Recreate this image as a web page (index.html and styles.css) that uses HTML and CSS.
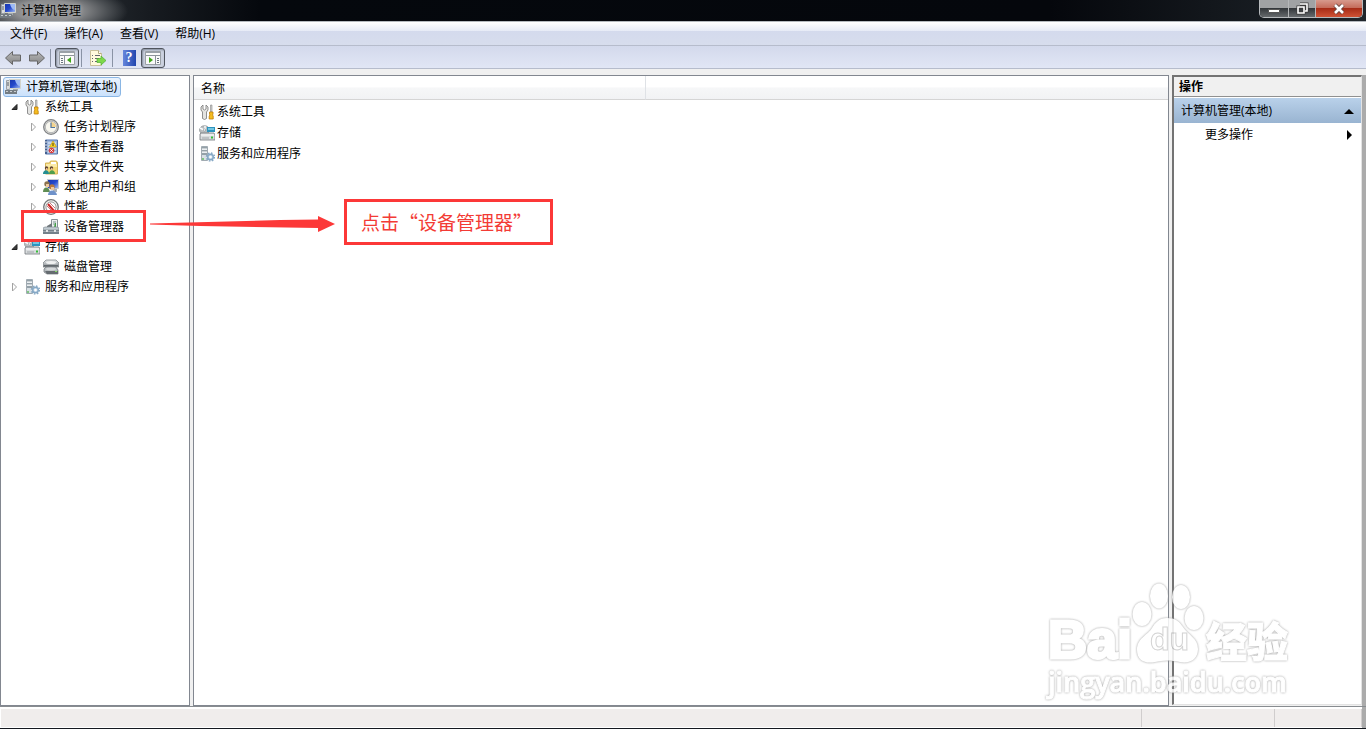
FILE: index.html
```html
<!DOCTYPE html>
<html lang="zh-CN">
<head>
<meta charset="utf-8">
<title>计算机管理</title>
<link rel="stylesheet" href="styles.css">
</head>
<body>
<svg class="sprite" aria-hidden="true">
  <defs>
    <linearGradient id="g-screen" x1="0" y1="0" x2="1" y2="1"><stop offset="0" stop-color="#1735ad"/><stop offset=".5" stop-color="#2549cc"/><stop offset="1" stop-color="#a9c4f5"/></linearGradient>
    <linearGradient id="g-metal" x1="0" y1="0" x2="0" y2="1"><stop offset="0" stop-color="#e8eaec"/><stop offset="1" stop-color="#858b90"/></linearGradient>
    <linearGradient id="g-arrow" x1="0" y1="0" x2="0" y2="1"><stop offset="0" stop-color="#b8b8b8"/><stop offset="1" stop-color="#858585"/></linearGradient>
  </defs>
  <symbol id="computer" viewBox="0 0 16 16">
    <path d="M1.500 1.500h3v9h-3z" fill="#d9dcdf" stroke="#9aa1a6"/><path d="M2 4h2M2 6h2" stroke="#5b6167"/>
    <path d="M4.500.5h11v9h-11z" fill="url(#g-screen)" stroke="#d2d4cc"/><path d="M10 1h5v6c-2 0-4-2-5-6z" fill="#9dbaf4"/>
    <path d="M8 10h5v2H8z" fill="#a4abb0"/><path d="M0 11h12v4H0z" fill="#747c82"/><path d="M1 12.500h2M5 12.500h2M9 12.500h2" stroke="#c9cdd0"/>
  </symbol>
  <symbol id="tools" viewBox="0 0 16 16">
    <path d="M4 1v4l1.500 1L7 5V1l2 2v3L7.500 8v6.500l-2 1-2-1V8L2 6V3z" fill="#e4e4e2" stroke="#777" stroke-width=".8"/>
    <path d="M11.500 1H13v7h-1.500z" fill="#d2d2d2" stroke="#777" stroke-width=".5"/><path d="M10.500 8H14v2l-.5 1 .7 1v3h-4v-3l.8-1-.5-1z" fill="#f5bd20" stroke="#c07e08" stroke-width=".8"/>
  </symbol>
  <symbol id="clock" viewBox="0 0 16 16">
    <circle cx="8" cy="8" r="7.300" fill="#dedcd6" stroke="#7f8285" stroke-width="1.300"/><circle cx="8" cy="8" r="5.700" fill="#f8f7ef" stroke="#b4b6b8"/>
    <path d="M8 8V3a5 5 0 0 1 5 5z" fill="#f2d38f"/><path d="M8 3.500V8.500H12" fill="none" stroke="#4f74a0" stroke-width="1.200"/>
  </symbol>
  <symbol id="events" viewBox="0 0 16 16">
    <path d="M2.500 1h12v14h-12z" fill="#9db6dc" stroke="#5474ac"/><path d="M3 1v14" stroke="#44608f" stroke-width="2"/><path d="M1 3h3M1 6h3M1 9h3M1 12h3" stroke="#e6e8ee"/>
    <path d="M5 4h8M5 7h8M5 10h8M5 13h8" stroke="#e9f0fb"/><path d="M10 2l3.500 6h-7z" fill="#ffdb28" stroke="#c49504" stroke-width=".6"/><path d="M10 4v3" stroke="#40350a"/>
    <circle cx="8.500" cy="11.500" r="2.800" fill="#d83e3e"/><path d="M7.300 10.300l2.400 2.400m0-2.400l-2.400 2.400" stroke="#fff"/>
  </symbol>
  <symbol id="shared" viewBox="0 0 16 16">
    <path d="M2.500 4h4l1-2h6l1 2v11h-12z" fill="#f4d774" stroke="#d4b45a"/><path d="M8 3h5v2H8z" fill="#fff"/><path d="M3 5h11v3H3z" fill="#fbeaa7"/>
    <circle cx="3.500" cy="9" r="1.700" fill="#5f4634"/><circle cx="8.500" cy="9" r="1.700" fill="#5f4634"/><path d="M3 9h1.500v2H3zM8 9h1.500v2H8z" fill="#e9bd92"/>
    <path d="M0 15c0-5 6-5 6 0z" fill="#268f91"/><path d="M6 15c0-5 6-5 6 0z" fill="#4f9e4c"/>
  </symbol>
  <symbol id="users" viewBox="0 0 16 16">
    <path d="M4.500.5h11v9h-11z" fill="url(#g-screen)" stroke="#c7cbd0"/><path d="M10 10h4v3h-4z" fill="#aab1b8"/>
    <circle cx="4" cy="5" r="2.700" fill="#8a724f"/><circle cx="9" cy="8" r="2.700" fill="#b7793d"/><path d="M3 5h3v3H3zM8 8h3v3H8z" fill="#f0c89c"/>
    <path d="M0 13c0-6 6-6 7 0z" fill="#5f8d53"/><path d="M5 16c0-6 8-6 9 0z" fill="#6f92ca"/>
  </symbol>
  <symbol id="performance" viewBox="0 0 16 16">
    <circle cx="8" cy="8" r="7.300" fill="#f4f3ef" stroke="#74777a" stroke-width="1.300"/><circle cx="8" cy="8" r="5.100" fill="#fff" stroke="#949799"/>
    <path d="M5 5l6 7" stroke="#cf2525" stroke-width="2"/><path d="M7 4l5 5M4 7l4 4" stroke="#bb5959" stroke-width=".8"/>
  </symbol>
  <symbol id="device" viewBox="0 0 16 16">
    <path d="M8.500.5h6v9h-6z" fill="#edf0f0" stroke="#899197"/><path d="M10 2h3v4h-3z" fill="#b4c2c0"/><path d="M12 4h1v4h-2z" fill="#43a047"/><path d="M4 7l5-3v4H4z" fill="#6d7479"/>
    <path d="M0 9l2-1h12l2 1v2H0z" fill="#c2cbd2" stroke="#828c94" stroke-width=".7"/><path d="M0 11h16v4H0z" fill="#74818b"/><path d="M0 12.500h16" stroke="#99a4ac"/><path d="M3 11h2v2H3zM11 11h2v2h-2z" fill="#e0e4e6"/>
  </symbol>
  <symbol id="storage" viewBox="0 0 16 16">
    <ellipse cx="5.500" cy="5" rx="5" ry="4.300" fill="#b9bdbf" stroke="#888e91" stroke-width=".7"/><path d="M1 3l4 2M6 1v4" stroke="#f9fafb" stroke-width="1.500"/><circle cx="5.500" cy="5" r="1.200" fill="#eef2f3" stroke="#7a8185" stroke-width=".5"/>
    <path d="M8 2h8v5H8z" fill="#2c93be"/><path d="M9 3h6v2H9z" fill="#72c5e1"/><path d="M1 9l1-1h13l1 2v5H1z" fill="#d9dcde" stroke="#71777b" stroke-width=".8"/><path d="M2 10h13" stroke="#fff"/><path d="M12 11.500h2v2h-2z" fill="#35bd37"/><path d="M3 13h7" stroke="#a1a6aa"/>
  </symbol>
  <symbol id="disk" viewBox="0 0 16 16">
    <path d="M3 1h10l3 3v4H0V4z" fill="url(#g-metal)" stroke="#757b80" stroke-width=".7"/><ellipse cx="8" cy="3.500" rx="5" ry="1.600" fill="#f0f1f1"/><path d="M1 6h14v1.500H1z" fill="#62686c"/>
    <path d="M3 8h10l2 3v4H4l-3-2v-3z" fill="#b7bcbf" stroke="#6e7478" stroke-width=".7"/><ellipse cx="8" cy="10" rx="5" ry="1.400" fill="#d4d7d9"/><path d="M2 12h13v3H4z" fill="#656b70"/><path d="M12 12.500h2" stroke="#82dc63"/>
  </symbol>
  <symbol id="services" viewBox="0 0 16 16">
    <path d="M2.500.5h6v14h-6z" fill="#d7dfe4" stroke="#a1abb2"/><path d="M3 2h5M3 5h5M3 8h5" stroke="#51636c"/><path d="M3 3h5M3 6h5" stroke="#fff"/><path d="M3 12h2v2H3z" fill="#7fc582"/>
    <circle cx="11.500" cy="11" r="2.800" fill="#c5d8e8" stroke="#86a8c5" stroke-width="1.400"/><circle cx="11.500" cy="11" r="4" fill="none" stroke="#86a8c5" stroke-width="1.500" stroke-dasharray="1.600 1.540"/><circle cx="11.500" cy="11" r="1.300" fill="#fff"/>
  </symbol>
  <symbol id="pane-left" viewBox="0 0 16 16"><path d="M.5 1.500h15v13H.5z" fill="#fafafa" stroke="#9aa0a6"/><path d="M1 2.500h14" stroke="#9aa0a8"/><path d="M1 5.500h14M5.500 5.500V15" stroke="#8d949b"/><path d="M2 8.500h2M2 10.500h2M2 12.500h2" stroke="#68747e"/><path d="M12 7v6l-4-3z" fill="#3fa619"/></symbol>
  <symbol id="pane-right" viewBox="0 0 16 16"><path d="M.5 1.500h15v13H.5z" fill="#fafafa" stroke="#9aa0a6"/><path d="M1 2.500h14" stroke="#9aa0a8"/><path d="M1 5.500h14M10.500 5.500V15" stroke="#8d949b"/><path d="M12 8.500h2M12 10.500h2M12 12.500h2" stroke="#68747e"/><path d="M4 7v6l4-3z" fill="#3fa619"/></symbol>
  <symbol id="export" viewBox="0 0 16 16"><path d="M.5.5h8l3 3v12H.5z" fill="#fffadd" stroke="#c9c19b"/><path d="M8.500.5v3h3" fill="#fff" stroke="#b3aa81"/><path d="M2 5.500h1M5 5.500h5M2 8.500h1M5 8.500h4M2 11.500h1M5 11.500h5" stroke="#63656e"/><path d="M7 8.500h4V6l5 4.500-5 4.500v-2.500H7z" fill="#7ed94b" stroke="#4fae37" stroke-width=".7"/></symbol>
  <symbol id="back" viewBox="0 0 16 16"><path d="M.5 8l7-6.500V5h8v6h-8v3.500z" fill="url(#g-arrow)" stroke="#666"/></symbol>
  <symbol id="forward" viewBox="0 0 16 16"><path d="M15.500 8l-7-6.500V5h-8v6h8v3.500z" fill="url(#g-arrow)" stroke="#666"/></symbol>
  <symbol id="open" viewBox="0 0 10 10"><path d="M8 2.500v5H3z" fill="#3a3a3a" stroke="#222"/></symbol>
  <symbol id="closed" viewBox="0 0 10 10"><path d="M3.500 1l4 4-4 4z" fill="#fff" stroke="#a3a3a3"/></symbol>
</svg>

<header class="titlebar">
  <svg class="icon"><use href="#computer"/></svg>
  <h1 class="title">计算机管理</h1>
  <div class="caption">
    <button class="cap cap-min" aria-label="最小化"><svg viewBox="0 0 14 14"><path d="M1.500 7.500h11v3h-11z" fill="#fff" stroke="#555"/></svg></button>
    <button class="cap cap-restore" aria-label="还原"><svg viewBox="0 0 14 14"><path d="M5 2h7v7h-2M3 5h6v6H3z" fill="none" stroke="#3b3b3b" stroke-width="3"/><path d="M5 2h7v7h-2M3 5h6v6H3z" fill="none" stroke="#fff" stroke-width="1.600"/></svg></button>
    <button class="cap cap-close" aria-label="关闭"><svg viewBox="0 0 14 14"><path d="M3 3l8 8M11 3l-8 8" stroke="#66443f" stroke-width="4.400"/><path d="M3 3l8 8M11 3l-8 8" stroke="#fff" stroke-width="2.600"/></svg></button>
  </div>
</header>

<nav class="menubar">
  <button class="menu">文件(F)</button><button class="menu">操作(A)</button><button class="menu">查看(V)</button><button class="menu">帮助(H)</button>
</nav>

<div class="toolbar">
  <button class="tool" aria-label="后退"><svg class="icon"><use href="#back"/></svg></button>
  <button class="tool" aria-label="前进"><svg class="icon"><use href="#forward"/></svg></button>
  <span class="divider"></span>
  <button class="tool pressed" aria-label="显示/隐藏控制台树"><svg class="icon"><use href="#pane-left"/></svg></button>
  <span class="divider"></span>
  <button class="tool" aria-label="导出列表"><svg class="icon"><use href="#export"/></svg></button>
  <span class="divider"></span>
  <button class="tool" aria-label="帮助"><span class="help">?</span></button>
  <button class="tool pressed" aria-label="显示/隐藏操作窗格"><svg class="icon"><use href="#pane-right"/></svg></button>
</div>

<main class="workspace">
  <nav class="pane tree">
    <a class="root" href="#"><svg class="icon"><use href="#computer"/></svg>计算机管理(本地)</a>
    <ul>
      <li><a class="node" href="#"><svg class="twisty"><use href="#open"/></svg><svg class="icon"><use href="#tools"/></svg>系统工具</a>
        <ul>
          <li><a class="node" href="#"><svg class="twisty"><use href="#closed"/></svg><svg class="icon"><use href="#clock"/></svg>任务计划程序</a></li>
          <li><a class="node" href="#"><svg class="twisty"><use href="#closed"/></svg><svg class="icon"><use href="#events"/></svg>事件查看器</a></li>
          <li><a class="node" href="#"><svg class="twisty"><use href="#closed"/></svg><svg class="icon"><use href="#shared"/></svg>共享文件夹</a></li>
          <li><a class="node" href="#"><svg class="twisty"><use href="#closed"/></svg><svg class="icon"><use href="#users"/></svg>本地用户和组</a></li>
          <li><a class="node" href="#"><svg class="twisty"><use href="#closed"/></svg><svg class="icon"><use href="#performance"/></svg>性能</a></li>
          <li><a class="node" href="#"><span class="twisty"></span><svg class="icon"><use href="#device"/></svg>设备管理器</a></li>
        </ul>
      </li>
      <li><a class="node" href="#"><svg class="twisty"><use href="#open"/></svg><svg class="icon"><use href="#storage"/></svg>存储</a>
        <ul>
          <li><a class="node" href="#"><span class="twisty"></span><svg class="icon"><use href="#disk"/></svg>磁盘管理</a></li>
        </ul>
      </li>
      <li><a class="node" href="#"><svg class="twisty"><use href="#closed"/></svg><svg class="icon"><use href="#services"/></svg>服务和应用程序</a></li>
    </ul>
  </nav>

  <section class="pane list">
    <table>
      <thead><tr><th class="name" scope="col">名称</th><td></td></tr></thead>
      <tbody>
        <tr><td><a class="entry" href="#"><svg class="icon"><use href="#tools"/></svg>系统工具</a></td><td></td></tr>
        <tr><td><a class="entry" href="#"><svg class="icon"><use href="#storage"/></svg>存储</a></td><td></td></tr>
        <tr><td><a class="entry" href="#"><svg class="icon"><use href="#services"/></svg>服务和应用程序</a></td><td></td></tr>
      </tbody>
    </table>
  </section>

  <aside class="actions">
    <h2 class="actions-title">操作</h2>
    <button class="group">计算机管理(本地)<svg viewBox="0 0 10 10"><path d="M5 3l5 5H0z"/></svg></button>
    <button class="more">更多操作<svg viewBox="0 0 10 10"><path d="M3 0l5 5-5 5z"/></svg></button>
  </aside>
  <div class="edge"></div>
</main>

<footer class="status"><span class="cell grow"></span><span class="cell mid"></span><span class="cell end"></span></footer>

<div class="mark target"></div>
<svg class="pointer" viewBox="0 0 186 16"><path d="M0 7.500L130 4l38-.5V0l17 8-17 8v-4L50 10 0 8.500z" fill="#fc3838"/></svg>
<div class="mark note">点击“设备管理器”</div>

<div class="watermark">
  <div class="brand">
    <span class="bai halo">Bai</span>
    <span class="paw"><svg class="halo" viewBox="0 0 76 84"><g fill="#fff"><ellipse cx="12" cy="33" rx="9.500" ry="12"/><ellipse cx="29" cy="15" rx="9" ry="12.500"/><ellipse cx="51" cy="16" rx="9" ry="12"/><ellipse cx="64" cy="37" rx="9.500" ry="12"/><path d="M37 34c-8 0-12 5-15 10C18 51 7 54 7 66c0 11 9 14 18 12 8-2 16-2 25 0 10 2 18-3 18-13 0-11-10-14-15-22-4-6-8-9-16-9z" transform="translate(0 3)"/></g></svg><span class="du">du</span></span>
    <span class="jingyan halo">经验</span>
  </div>
  <div class="site halo">jingyan.baidu.com</div>
</div>
</body>
</html>
```
FILE: styles.css
```css
* { box-sizing: border-box; }

body {
  margin: 0;
  height: 100vh;
  display: flex;
  flex-direction: column;
  position: relative;
  overflow: hidden;
  background: #f0f0f0;
  border-bottom: 1px solid #14181f;
  color: #000;
  font: 12px/20px "Open Sans", "Noto Sans CJK SC", sans-serif;
}

button { margin: 0; padding: 0; border: 0; background: none; color: inherit; font: inherit; }
a { color: inherit; text-decoration: none; }
ul { margin: 0; padding: 0; list-style: none; }
h1, h2 { margin: 0; font-size: 12px; }
.sprite { position: absolute; width: 0; height: 0; }
.icon { width: 16px; height: 16px; flex: none; }

.titlebar {
  flex: none;
  height: 22px;
  display: flex;
  align-items: center;
  gap: 5px;
  border-bottom: 1px solid #b5babf;
  background: radial-gradient(ellipse 80px 26px at 48px 11px, #8d8e90 0 40%, #4a4e52 75%, transparent 100%), linear-gradient(90deg, #343a3f 0, #171b20 150px, #05080d 260px, #05070c 1050px, #20262b 100%);
}
.title { flex: 1; font-weight: 400; line-height: 20px; text-shadow: 0 0 4px #bbb; }
.caption {
  align-self: flex-start;
  display: flex;
  height: 18px;
  margin-right: 3px;
  border: 1px solid #b7babd;
  border-top: 0;
  border-radius: 0 0 5px 5px;
  overflow: hidden;
}
.cap { display: flex; align-items: center; justify-content: center; width: 27px; border-right: 1px solid #b5b7b9; background: linear-gradient(#a0a2a4 0 45%, #34383c 50%, #666a6d); }
.cap svg { width: 14px; height: 14px; }
.cap-min { width: 29px; }
.cap-close { width: 46px; border-right: 0; background: linear-gradient(#d79a8d 0, #c56c5b 45%, #a72c17 50%, #cf5335); }

.menubar {
  flex: none;
  display: flex;
  gap: 1px;
  height: 24px;
  padding-left: 2px;
  border-bottom: 1px solid #b6bccc;
  background: linear-gradient(#fff 0, #e7ebf6 38%, #d4daed 40%, #d7dded 100%);
}
.menu { padding: 1px 8px 0; line-height: 22px; }
.toolbar {
  flex: none;
  display: flex;
  align-items: center;
  height: 23px;
  padding: 1px 0 0 1px;
  border-bottom: 1px solid #b6bccc;
  background: linear-gradient(#d3d9ec, #e1e6f5);
}
.tool { display: flex; align-items: center; justify-content: center; width: 24px; height: 20px; }
.tool:first-child + .tool { width: 23px; }
.tool.pressed { border: 1px solid #50555e; border-radius: 3px; background: #cbd1df; box-shadow: inset 1px 1px 2px #858d9c; }
.divider { width: 1px; height: 18px; margin: 0 4px 0 2px; background: #8a93a5; }
.help { width: 13px; height: 16px; background: linear-gradient(90deg, #6686dc, #2145ae); color: #fff; font: 700 14px/16px "Liberation Serif", serif; text-align: center; }

.workspace { flex: 1; min-height: 0; display: grid; grid-template-columns: 193px 1fr 190px 4px; padding-top: 6px; }
.pane { border: 1px solid #828790; background: #fff; margin-right: 3px; min-width: 0; }
.tree { padding: 1px; }
.root {
  display: inline-flex;
  align-items: center;
  gap: 5px;
  height: 20px;
  margin-left: 1px;
  padding: 0 3px 0 1px;
  border: 1px solid #8ab6e4;
  border-radius: 3px;
  background: linear-gradient(#eaf3fd, #cbe1fb);
  vertical-align: top;
}
.tree > ul { padding-left: 7px; }
.tree ul ul { padding-left: 19px; }
.node { display: flex; align-items: center; height: 20px; }
.node .icon { margin: 0 5px; }
.twisty { width: 10px; height: 10px; flex: none; }

table { width: 100%; border-collapse: separate; border-spacing: 0; table-layout: fixed; }
th, td { padding: 0; text-align: left; font-weight: 400; }
thead tr { height: 24px; background: linear-gradient(#fff 0 45%, #f6f7f8 50%, #f1f2f4); }
thead th, thead td { border-bottom: 1px solid #d5d5d5; }
.name { width: 452px; padding: 2px 0 0 7px; border-right: 1px solid #dfe2e6; }
tbody tr { height: 21px; }
.entry { display: flex; align-items: center; gap: 2px; height: 21px; padding-left: 5px; }
tbody tr:first-child .entry { margin-top: 1px; }

.actions { margin-bottom: 1px; border: 2px solid #737373; border-right: 1px solid #e3e3e3; border-bottom: 1px solid #e3e3e3; background: #fff; }
.actions-title { height: 20px; padding-left: 5px; border-bottom: 1px solid #909090; background: #f0f0f0; font-weight: 700; }
.group, .more { display: flex; align-items: center; justify-content: space-between; width: 100%; padding-right: 7px; }
.group { height: 25px; margin-top: 1px; padding-left: 7px; background: linear-gradient(#b9d1ea, #99b4d1); }
.more { height: 23px; padding-left: 31px; }
.group svg, .more svg { width: 10px; height: 10px; }
.edge { background: #ababab; }

.status { flex: none; display: flex; height: 22px; padding: 2px 4px 1px 1px; border-top: 1px solid #888c90; background: #fff; box-shadow: inset -4px 0 #ababab; }
.cell { background: #f0edec; border-right: 1px solid #d0cdcd; }
.grow { flex: 1; }
.mid { width: 133px; }
.end { width: 87px; }

.mark { position: absolute; border: 3px solid #fc3838; }
.target { left: 21px; top: 210px; width: 125px; height: 32px; }
.note { left: 344px; top: 199px; width: 209px; height: 46px; padding-left: 14px; color: #f33b35; font: 19px/40px "Noto Sans CJK SC", sans-serif; white-space: nowrap; }
.pointer { position: absolute; left: 150px; top: 216px; width: 186px; height: 16px; }

.watermark { position: absolute; left: 1048px; top: 581px; color: #fff; opacity: .85; white-space: nowrap; }
.halo { filter: drop-shadow(0 0 1px #909090); }
.brand { display: flex; align-items: flex-end; height: 84px; }
.bai { width: 82px; font: 700 54px/52px "Liberation Sans", sans-serif; -webkit-text-stroke: 3px #fff; }
.paw { position: relative; width: 76px; height: 84px; }
.paw svg { display: block; width: 76px; height: 84px; }
.du { position: absolute; left: 20px; top: 38px; font: 700 32px/40px "Liberation Sans", sans-serif; -webkit-text-stroke: 1px #ccc; }
.jingyan { font: 900 41px/52px "Noto Sans CJK SC", sans-serif; -webkit-text-stroke: 1px #fff; }
.site { padding-top: 1px; font: 600 27px/32px "Open Sans", sans-serif; -webkit-text-stroke: 1px #fff; }
```
